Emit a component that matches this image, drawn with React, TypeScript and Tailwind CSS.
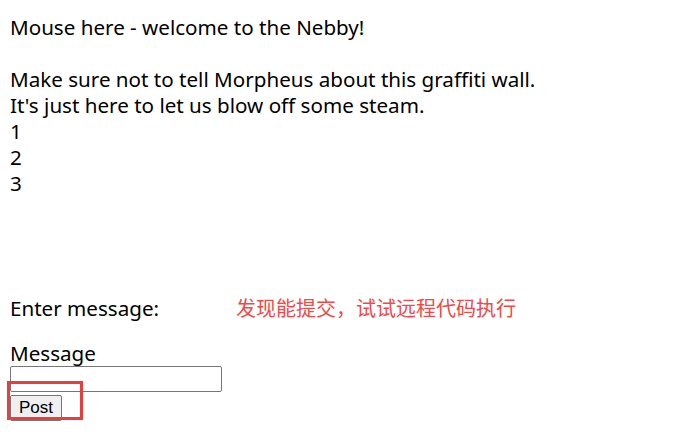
export default function App() {
  return (
    <div className="relative w-[696px] h-[443px] bg-white text-black px-[10px] pt-[14px] font-['Noto_Sans','Liberation_Sans',sans-serif] text-[20.6px] leading-[26px]">
      <p>Mouse here - welcome to the Nebby!</p>
      <p className="mt-[26px]">Make sure not to tell Morpheus about this graffiti wall.</p>
      <p>It's just here to let us blow off some steam.</p>
      <div>
        <div>1</div>
        <div>2</div>
        <div>3</div>
      </div>
      <div className="mt-[99px] flex items-center">
        <span className="w-[226px]">Enter message:</span>
        <span className="text-[20px] text-[#f24848] font-['Noto_Sans_CJK_SC',sans-serif]">发现能提交，试试远程代码执行</span>
      </div>
      <form className="mt-[19px]" onSubmit={(e) => e.preventDefault()}>
        <label className="block">Message</label>
        <input className="block w-[212px] h-[26px] border border-[#767676] rounded-[2px] px-1 text-[13px]" />
        <div className="relative inline-block">
          <button className="h-[26px] w-[52px] border border-[#767676] rounded-[2px] bg-[#efefef] text-[17px] leading-none font-['Liberation_Sans',sans-serif]">Post</button>
          <div className="absolute left-[-3px] top-[-11px] w-[76px] h-[39px] border-[3px] border-[#ee3b3b] pointer-events-none" />
        </div>
      </form>
    </div>
  );
}
